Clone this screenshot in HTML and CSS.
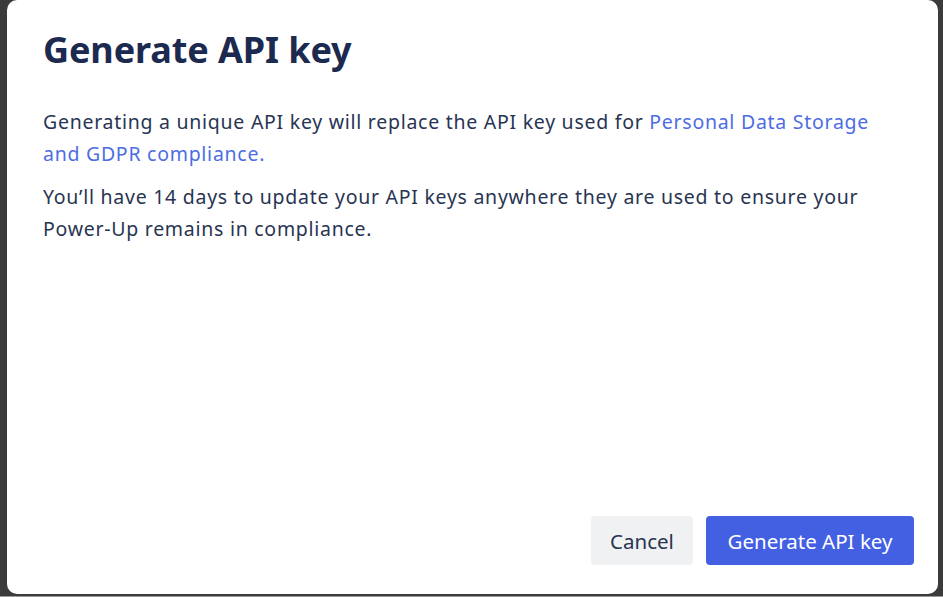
FILE: index.html
```html
<!DOCTYPE html>
<html>
<head>
<meta charset="utf-8">
<link rel="stylesheet" href="styles.css">
</head>
<body>
<div class="backdrop">
  <div class="dialog">
    <h1 class="title">Generate API key</h1>
    <div class="content">
      <p class="para">Generating a unique API key will replace the API key used for <a class="link" href="#">Personal Data Storage and GDPR compliance.</a></p>
      <p class="para">You’ll have 14 days to update your API keys anywhere they are used to ensure your Power-Up remains in compliance.</p>
    </div>
    <div class="footer">
      <button class="btn btn-secondary">Cancel</button>
      <button class="btn btn-primary">Generate API key</button>
    </div>
  </div>
</div>
</body>
</html>
```
FILE: styles.css
```css
html, body {
  margin: 0;
  padding: 0;
  height: 100%;
}
body {
  background: #3b3b3b;
  font-family: "Noto Sans", "Open Sans", sans-serif;
  overflow: hidden;
}
.backdrop {
  height: 597px;
  display: flex;
  padding: 0 5px 2px 7px;
  box-sizing: border-box;
  border-bottom: 1px solid #9a9a9a;
}
.dialog {
  flex: 1;
  background: #ffffff;
  border-radius: 10px;
  padding: 26px 24px 29px 36px;
  display: flex;
  flex-direction: column;
  box-sizing: border-box;
}
.title {
  margin: 0;
  font-size: 36px;
  font-weight: 700;
  color: #1c2a4f;
  line-height: 48px;
  letter-spacing: -0.1px;
}
.content {
  flex: 1;
  padding-top: 32px;
  padding-right: 20px;
}
.para {
  margin: 0 0 11px 0;
  font-size: 19.5px;
  line-height: 32px;
  letter-spacing: 0.73px;
  color: #283452;
}
.link {
  color: #4d6de3;
  text-decoration: none;
}
.footer {
  display: flex;
  justify-content: flex-end;
  gap: 13px;
}
.btn {
  border: none;
  border-radius: 4px;
  height: 49px;
  font-family: inherit;
  font-size: 20.5px;
  padding: 0;
  cursor: pointer;
}
.btn-secondary {
  background: #f0f1f3;
  color: #283452;
  width: 102px;
}
.btn-primary {
  background: #4360e2;
  color: #ffffff;
  width: 208px;
}
```
